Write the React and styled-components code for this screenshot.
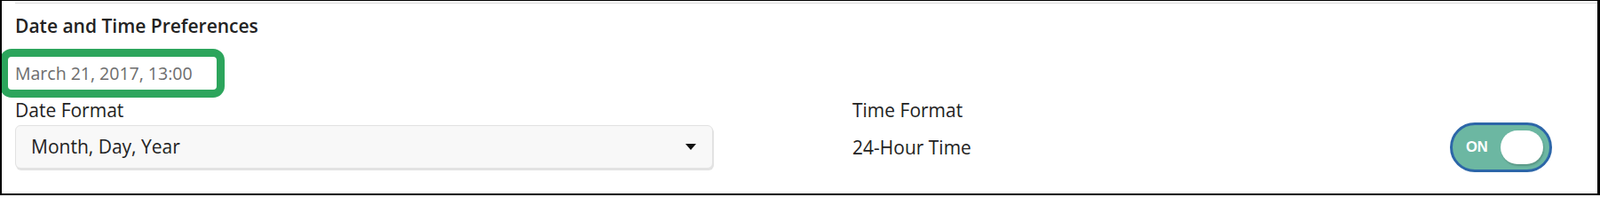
import React from "react";
import styled, { createGlobalStyle } from "styled-components";

const Global = createGlobalStyle`
  html, body { margin: 0; padding: 0; background: #fff; }
  body { font-family: "Open Sans", "Liberation Sans", sans-serif; }
  * { box-sizing: border-box; }
`;

const Frame = styled.section`
  width: 1802px;
  height: 220px;
  border-top: 1px solid #000;
  border-left: 2px solid #000;
  border-right: 3px solid #000;
  border-bottom: 2px solid #000;
  padding: 0 0 0 15px;
  background: #fff;
  overflow: hidden;
`;

const Divider = styled.div`
  margin-top: 2px;
  height: 1px;
  background: #d9d9d9;
`;

const Title = styled.h2`
  margin: 11px 0 0;
  font-size: 21px;
  line-height: 28px;
  font-weight: 600;
  color: #222;
`;

const Highlight = styled.div`
  margin: 12px 0 0 -17px;
  width: 253px;
  height: 55px;
  border: 9px solid #2ca55c;
  border-radius: 13px;
  padding-left: 8px;
  display: flex;
  align-items: center;
  background: #fff;
`;

const Preview = styled.span`
  font-size: 19.5px;
  line-height: 28px;
  color: #6d6d6d;
`;

const Grid = styled.div`
  display: grid;
  grid-template-columns: 786px 788px;
  column-gap: 157px;
  grid-template-rows: 28px 49px;
  row-gap: 3px;
  align-items: center;
`;

const Label = styled.div`
  font-size: 21px;
  line-height: 28px;
  color: #222;
`;

const Select = styled.div`
  height: 49px;
  display: flex;
  align-items: center;
  justify-content: space-between;
  padding: 0 18px 1px 17px;
  background: #f8f8f8;
  border: 1px solid #e2e2e2;
  border-radius: 6px;
  box-shadow: 1px 2px 0 #e2e2e2;
  font-size: 21px;
  color: #222;
`;

const Caret = styled.span`
  width: 0;
  height: 0;
  border-left: 6px solid transparent;
  border-right: 6px solid transparent;
  border-top: 7px solid #111;
`;

const SwitchRow = styled.div`
  display: flex;
  align-items: center;
  justify-content: space-between;
  height: 49px;
  font-size: 21px;
  color: #222;
`;

const Toggle = styled.div`
  width: 115px;
  height: 56px;
  border: 3px solid #2c66a8;
  border-radius: 28px;
  background: #6cb7a2;
  display: flex;
  align-items: center;
  justify-content: space-between;
  padding: 0 7px 0 15px;
`;

const ToggleText = styled.span`
  font-family: "Liberation Sans", Arial, sans-serif;
  font-weight: 700;
  font-size: 16.5px;
  color: #fff;
`;

const Knob = styled.span`
  width: 48px;
  height: 38px;
  border-radius: 19px;
  background: #fff;
  box-shadow: 1px 2px 2px rgba(0, 0, 0, 0.18);
`;

export default function App() {
  return (
    <>
      <Global />
      <Frame>
        <Divider />
        <Title>Date and Time Preferences</Title>
        <Highlight>
          <Preview>March 21, 2017, 13:00</Preview>
        </Highlight>
        <Grid>
          <Label>Date Format</Label>
          <Label>Time Format</Label>
          <Select>
            <span>Month, Day, Year</span>
            <Caret />
          </Select>
          <SwitchRow>
            <span>24-Hour Time</span>
            <Toggle>
              <ToggleText>ON</ToggleText>
              <Knob />
            </Toggle>
          </SwitchRow>
        </Grid>
      </Frame>
    </>
  );
}
